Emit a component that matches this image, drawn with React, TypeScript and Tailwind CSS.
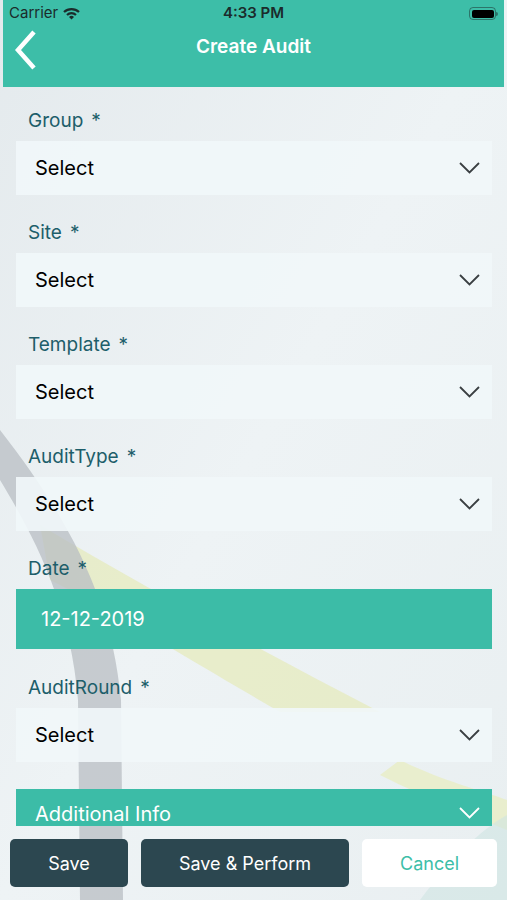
const fields = ['Group', 'Site', 'Template', 'AuditType']

function Chevron({ color }: { color: string }) {
    return (
        <svg width="21" height="12" viewBox="0 0 21 12">
            <path d="M1 1 L10.5 10.5 L20 1" stroke={color} strokeWidth="1.8" fill="none" />
        </svg>
    )
}

function Label({ text }: { text: string }) {
    return (
        <div className="pl-[12px] mb-[8px] leading-[24px] text-[19px] text-[#1d5e6a]">
            {text}
            <span className="ml-[8px]">*</span>
        </div>
    )
}

function SelectBox() {
    return (
        <div className="h-[54px] bg-[#f1f7f9]/90 flex items-center justify-between pl-[19px] pr-[12px]">
            <span className="text-[20px] text-black">Select</span>
            <Chevron color="#3a3f42" />
        </div>
    )
}

export default function App() {
    return (
        <div className="relative w-[507px] h-[900px] overflow-hidden bg-gradient-to-br from-[#e4eaed] via-[#eef3f5] to-[#e9eff1] font-['Inter',sans-serif] flex flex-col">
            {/* background swooshes */}
            <svg className="absolute inset-0 pointer-events-none" width="507" height="900" viewBox="0 0 507 900">
                <path d="M40 525 C150 590 260 650 380 712 L280 712 C190 660 110 610 50 580 Z" fill="#e6ebc0" opacity="0.8" />
                <path d="M400 760 C440 780 480 790 507 800 L507 830 C470 815 430 800 380 775 Z" fill="#e9edc4" opacity="0.8" />
                <path d="M420 900 C450 860 480 830 507 815 L507 900 Z" fill="#cfe5e2" opacity="0.6" />
                <path d="M0 480 C30 530 70 600 78 700 L80 900 L123 900 L121 700 C112 600 70 520 0 430 Z" fill="#b8bec3" opacity="0.75" />
            </svg>

            {/* header */}
            <div className="relative mx-[3px] h-[87px] bg-[#3dbea8] shrink-0">
                <div className="h-[27px] flex items-center justify-between pl-[6px] pr-[6px] text-[#1b2b2b]">
                    <div className="flex items-center gap-[5px] text-[15px]">
                        <span>Carrier</span>
                        <svg width="17" height="13" viewBox="0 0 17 13">
                            <path d="M1 5 A11 11 0 0 1 16 5" stroke="#1b2b2b" strokeWidth="2.2" fill="none" />
                            <path d="M4 8 A6.5 6.5 0 0 1 13 8" stroke="#1b2b2b" strokeWidth="2.2" fill="none" />
                            <path d="M8.5 12.5 L6 10 A3.5 3.5 0 0 1 11 10 Z" fill="#1b2b2b" />
                        </svg>
                    </div>
                    <span className="absolute left-1/2 -translate-x-1/2 text-[15px] font-semibold">4:33 PM</span>
                    <div className="flex items-center">
                        <div className="w-[27px] h-[13px] rounded-[4px] border border-[#1b2b2b]/50 p-[1.5px]">
                            <div className="w-full h-full rounded-[2px] bg-black" />
                        </div>
                        <div className="w-[2px] h-[4px] bg-[#1b2b2b]/50 rounded-r" />
                    </div>
                </div>
                <div className="relative h-[40px] flex items-center justify-center">
                    <svg className="absolute left-[9px] top-[3px]" width="26" height="40" viewBox="0 0 26 40">
                        <path d="M22 2 L6 20 L22 38" stroke="white" strokeWidth="4.5" fill="none" />
                    </svg>
                    <span className="text-white text-[19px] font-semibold">Create Audit</span>
                </div>
            </div>

            {/* form */}
            <div className="relative flex-1 overflow-hidden pt-[22px] pl-[16px] pr-[15px]">
                {fields.map((f) => (
                    <div key={f} className="mb-[26px]">
                        <Label text={f} />
                        <SelectBox />
                    </div>
                ))}
                <div className="mb-[27px]">
                    <Label text="Date" />
                    <div className="h-[60px] bg-[#3cbca7] flex items-center pl-[25px] text-white text-[20px]">12-12-2019</div>
                </div>
                <div className="mb-[27px]">
                    <Label text="AuditRound" />
                    <SelectBox />
                </div>
                <div className="h-[38px] bg-[#3cbca7] flex items-end justify-between pl-[19px] pr-[12px]">
                    <span className="text-white text-[20px] leading-[24px] mb-[1px]">Additional Info</span>
                    <div className="mb-[8px]">
                        <Chevron color="white" />
                    </div>
                </div>
            </div>

            {/* footer */}
            <div className="relative h-[74px] shrink-0 flex gap-[13px] px-[10px] pt-[13px]">
                <button className="w-[118px] h-[48px] rounded-[5px] bg-[#2c4750] text-white text-[18px]">Save</button>
                <button className="w-[208px] h-[48px] rounded-[5px] bg-[#2c4750] text-white text-[18px]">Save &amp; Perform</button>
                <button className="flex-1 h-[48px] rounded-[5px] bg-white text-[#3dbea8] text-[18px]">Cancel</button>
            </div>
        </div>
    )
}
